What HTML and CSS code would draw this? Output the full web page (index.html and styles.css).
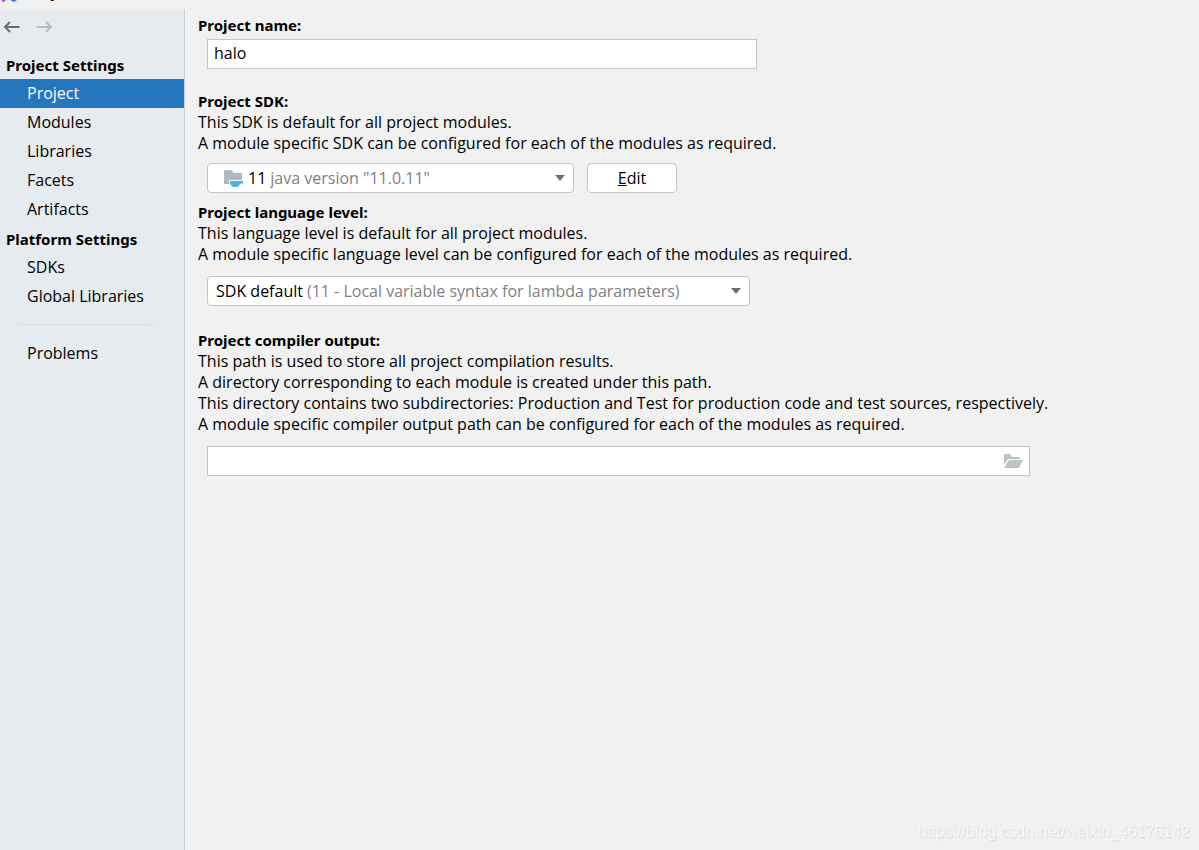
FILE: index.html
```html
<!DOCTYPE html>
<html lang="en">
<head>
<meta charset="utf-8">
<title>Project Structure</title>
<link rel="stylesheet" href="styles.css">
</head>
<body>
<header class="titlebar">
  <svg class="app-icon" width="18" height="18" viewBox="0 0 18 18" aria-hidden="true">
    <path d="M1 4l4-2v13l-3 3H0z" fill="#b74af7"/>
    <path d="M8 4l6-3 4 6-3 9-3 2-4-2z" fill="#3b6cf0"/>
    <path d="M4 4h9v10H4z" fill="#000"/>
  </svg>
  <span>Project Structure</span>
</header>
<div class="workspace">
  <aside class="sidebar">
    <div class="history">
      <button type="button" class="icon-button" aria-label="Back">
        <svg width="18" height="14" viewBox="0 0 18 14"><path d="M16.500 7H2M7 2L2 7l5 5" fill="none" stroke="#6e6e6e" stroke-width="2"/></svg>
      </button>
      <button type="button" class="icon-button" aria-label="Forward" disabled>
        <svg width="18" height="14" viewBox="0 0 18 14"><path d="M0.500 7H15M10 2l5 5-5 5" fill="none" stroke="#bababa" stroke-width="2"/></svg>
      </button>
    </div>
    <nav class="nav">
      <h2 class="nav-title">Project Settings</h2>
      <a class="nav-item selected" href="#project" aria-current="page">Project</a>
      <a class="nav-item" href="#modules">Modules</a>
      <a class="nav-item" href="#libraries">Libraries</a>
      <a class="nav-item" href="#facets">Facets</a>
      <a class="nav-item" href="#artifacts">Artifacts</a>
      <h2 class="nav-title">Platform Settings</h2>
      <a class="nav-item" href="#sdks">SDKs</a>
      <a class="nav-item" href="#global">Global Libraries</a>
      <hr class="nav-separator">
      <a class="nav-item" href="#problems">Problems</a>
    </nav>
  </aside>
  <main class="content" id="project">
    <section class="group">
      <label class="group-title" for="name">Project name:</label>
      <input class="field name-field" id="name" type="text" value="halo">
    </section>
    <section class="group sdk-group">
      <label class="group-title" for="sdk">Project SDK:</label>
      <p>This SDK is default for all project modules.</p>
      <p>A module specific SDK can be configured for each of the modules as required.</p>
      <div class="row">
        <div class="combo sdk-combo">
          <svg class="sdk-icon" width="20" height="18" viewBox="0 0 20 18" aria-hidden="true">
            <path d="M0 1h7l3 3h8v7H5v4H0z" fill="#adb8bf"/>
            <path d="M6 12h13v2l-3 1c-1 2-2 3-4 3h-1c-3 0-5-2-5-6z" fill="#40b6e0"/>
          </svg>
          <span>11</span>
          <select id="sdk"><option>java version "11.0.11"</option></select>
          <svg class="arrow" width="10" height="6" viewBox="0 0 10 6" aria-hidden="true"><path d="M0 0h10L5 6z" fill="#6e6e6e"/></svg>
        </div>
        <button type="button" class="button"><u>E</u>dit</button>
      </div>
    </section>
    <section class="group level-group">
      <label class="group-title" for="level">Project language level:</label>
      <p>This language level is default for all project modules.</p>
      <p>A module specific language level can be configured for each of the modules as required.</p>
      <div class="combo level-combo">
        <span>SDK default</span>
        <select id="level"><option>(11 - Local variable syntax for lambda parameters)</option></select>
        <svg class="arrow" width="10" height="6" viewBox="0 0 10 6" aria-hidden="true"><path d="M0 0h10L5 6z" fill="#6e6e6e"/></svg>
      </div>
    </section>
    <section class="group output-group">
      <label class="group-title" for="output">Project compiler output:</label>
      <p>This path is used to store all project compilation results.</p>
      <p>A directory corresponding to each module is created under this path.</p>
      <p>This directory contains two subdirectories: Production and Test for production code and test sources, respectively.</p>
      <p>A module specific compiler output path can be configured for each of the modules as required.</p>
      <div class="field path-field">
        <input id="output" type="text">
        <button type="button" class="icon-button" aria-label="Browse">
          <svg width="20" height="14" viewBox="0 0 20 14"><path d="M0 0h6l2 3h8v2H4l-4 6z" fill="#bcc3c7"/><path d="M5 6h14l-4 8H0z" fill="#bcc3c7"/></svg>
        </button>
      </div>
    </section>
  </main>
</div>
<div class="watermark">https://blog.csdn.net/weixin_46176142</div>
</body>
</html>
```
FILE: styles.css
```css
* { box-sizing: border-box; }

body {
  margin: 0;
  min-height: 100vh;
  display: flex;
  flex-direction: column;
  background: #f1f1f1;
  color: #000;
  font: 16px/21px "Open Sans", "Noto Sans", sans-serif;
}

input, select, button { font: inherit; color: inherit; }
p, h2 { margin: 0; }

.titlebar {
  display: flex;
  align-items: flex-end;
  gap: 6px;
  height: 9px;
  padding: 0 2px 7px;
  overflow: hidden;
}

.workspace { flex: 1; display: flex; }

.sidebar {
  flex: none;
  width: 185px;
  background: #e6ebef;
  border-right: 1px solid #cdcdcd;
}

.history { display: flex; gap: 15px; padding: 11px 3px; }

.icon-button {
  display: flex;
  padding: 0;
  border: 0;
  background: none;
}

.nav { display: flex; flex-direction: column; padding-top: 5px; }

.nav-title {
  padding: 1px 0 0 6px;
  font: bold 15px/28px "Noto Sans", "Open Sans", sans-serif;
}

.nav-item {
  padding-left: 27px;
  line-height: 29px;
  color: inherit;
  text-decoration: none;
}

.nav-item.selected { background: #2675bf; color: #fff; }

.nav-separator {
  width: 160px;
  height: 1px;
  margin: 13px 0 14px 6px;
  border: 0;
  background: linear-gradient(90deg, transparent, #d5d8da 20%, #d5d8da 80%, transparent);
}

.content { flex: 1; min-width: 0; padding: 6px 13px; }

.group { display: flex; flex-direction: column; align-items: flex-start; }
.group-title { font: bold 15px/21px "Noto Sans", "Open Sans", sans-serif; }
.sdk-group { margin-top: 22px; }
.level-group { margin-top: 9px; }
.output-group { margin-top: 24px; }

.field {
  height: 30px;
  margin-left: 9px;
  border: 1px solid #c4c4c4;
  background: #fff;
}

.name-field { width: 550px; max-width: 100%; margin-top: 3px; padding: 0 6px 2px; }

.row { display: flex; gap: 13px; margin-top: 9px; }

.combo {
  display: flex;
  align-items: center;
  gap: 4px;
  height: 30px;
  margin-left: 9px;
  padding: 0 8px;
  border: 1px solid #c4c4c4;
  border-radius: 4px;
  background: #fff;
}

.combo select {
  flex: 1;
  min-width: 0;
  padding: 0;
  border: 0;
  background: none;
  color: #808080;
  appearance: none;
}

.sdk-combo { width: 367px; padding: 0 8px 0 16px; }
.level-combo { width: 543px; max-width: 100%; margin-top: 11px; }

.button {
  width: 90px;
  border: 1px solid #c4c4c4;
  border-radius: 4px;
  background: #fff;
}

.path-field {
  display: flex;
  align-items: center;
  width: 823px;
  max-width: 100%;
  margin-top: 11px;
  padding-right: 5px;
}

.path-field input { flex: 1; min-width: 0; border: 0; background: none; }

.watermark {
  position: absolute;
  right: 9px;
  bottom: 8px;
  color: #f8f8f8;
  font: 16px/20px "Liberation Sans", sans-serif;
  text-shadow: 1px 1px 1px #d8d8d8;
}
```
